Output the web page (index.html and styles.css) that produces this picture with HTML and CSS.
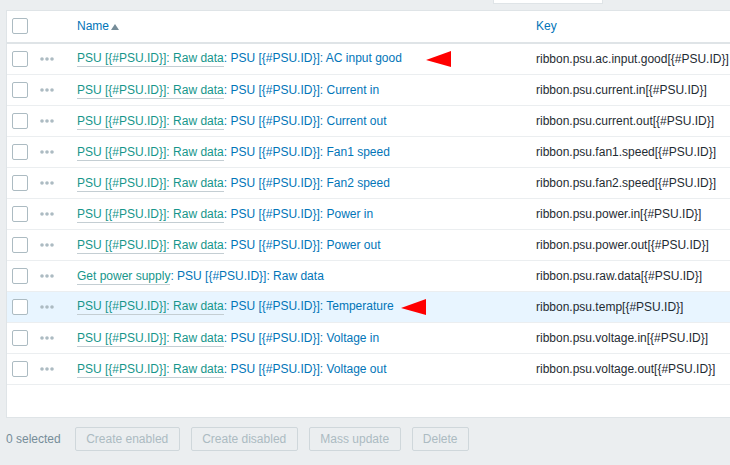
FILE: index.html
```html
<!DOCTYPE html>
<html>
<head>
    <title>Item prototypes</title>
    <link rel="stylesheet" href="styles.css">
</head>
<body>
    <div class="top-strip">
        <div class="search-stub"></div>
    </div>

    <div class="panel">
        <table class="list">
            <thead>
                <tr>
                    <th class="col-check"><span class="checkbox"></span></th>
                    <th class="col-menu"></th>
                    <th class="col-name"><a class="sort">Name</a><span class="arrow-up"></span></th>
                    <th class="col-key"><a class="sort">Key</a></th>
                </tr>
            </thead>
            <tbody id="rows"></tbody>
        </table>
    </div>

    <div class="footer">
        <span class="selected">0 selected</span>
        <button class="btn btn-enabled" disabled>Create enabled</button>
        <button class="btn btn-disabled" disabled>Create disabled</button>
        <button class="btn btn-mass" disabled>Mass update</button>
        <button class="btn btn-delete" disabled>Delete</button>
    </div>

    <script>
        // parent, name, key, mark
        const items = [
            ["PSU [{#PSU.ID}]: Raw data", "PSU [{#PSU.ID}]: AC input good", "ribbon.psu.ac.input.good[{#PSU.ID}]", "far"],
            ["PSU [{#PSU.ID}]: Raw data", "PSU [{#PSU.ID}]: Current in", "ribbon.psu.current.in[{#PSU.ID}]"],
            ["PSU [{#PSU.ID}]: Raw data", "PSU [{#PSU.ID}]: Current out", "ribbon.psu.current.out[{#PSU.ID}]"],
            ["PSU [{#PSU.ID}]: Raw data", "PSU [{#PSU.ID}]: Fan1 speed", "ribbon.psu.fan1.speed[{#PSU.ID}]"],
            ["PSU [{#PSU.ID}]: Raw data", "PSU [{#PSU.ID}]: Fan2 speed", "ribbon.psu.fan2.speed[{#PSU.ID}]"],
            ["PSU [{#PSU.ID}]: Raw data", "PSU [{#PSU.ID}]: Power in", "ribbon.psu.power.in[{#PSU.ID}]"],
            ["PSU [{#PSU.ID}]: Raw data", "PSU [{#PSU.ID}]: Power out", "ribbon.psu.power.out[{#PSU.ID}]"],
            ["Get power supply", "PSU [{#PSU.ID}]: Raw data", "ribbon.psu.raw.data[{#PSU.ID}]"],
            ["PSU [{#PSU.ID}]: Raw data", "PSU [{#PSU.ID}]: Temperature", "ribbon.psu.temp[{#PSU.ID}]", "near"],
            ["PSU [{#PSU.ID}]: Raw data", "PSU [{#PSU.ID}]: Voltage in", "ribbon.psu.voltage.in[{#PSU.ID}]"],
            ["PSU [{#PSU.ID}]: Raw data", "PSU [{#PSU.ID}]: Voltage out", "ribbon.psu.voltage.out[{#PSU.ID}]"]
        ];

        const dots = '<svg class="dots" width="14" height="4" viewBox="0 0 14 4">' +
            '<circle cx="2" cy="2" r="1.8"/><circle cx="7" cy="2" r="1.8"/><circle cx="12" cy="2" r="1.8"/></svg>';

        const tbody = document.getElementById('rows');
        items.forEach(([parent, name, key, mark]) => {
            const tr = document.createElement('tr');
            if (mark === 'near') tr.className = 'hover';
            let arrow = '';
            if (mark) {
                arrow = `<svg class="mark mark-${mark}" width="25" height="16" viewBox="0 0 25 16">` +
                    '<polygon points="0,9 25,0 25,16" fill="#ff0000"/></svg>';
            }
            tr.innerHTML =
                '<td class="col-check"><span class="checkbox"></span></td>' +
                `<td class="col-menu">${dots}</td>` +
                `<td class="col-name"><a class="parent">${parent}</a>: <a class="item">${name}</a>${arrow}</td>` +
                `<td class="col-key">${key}</td>`;
            tbody.appendChild(tr);
        });
    </script>
</body>
</html>
```

FILE: styles.css
```css
body {
    margin: 0;
    background: #ebeef0;
    font-family: "Liberation Sans", Arial, sans-serif;
    font-size: 12px;
    color: #1f2c33;
    overflow: hidden;
}

.top-strip {
    height: 10px;
}

.search-stub {
    margin-left: 493px;
    width: 108px;
    height: 3px;
    background: #fff;
    border: 1px solid #dfe4e7;
    border-top: none;
}

.panel {
    margin-left: 6px;
    width: 723px;
    background: #fff;
    border: 1px solid #dfe4e7;
    padding-bottom: 32px;
}

.list {
    width: 100%;
    border-collapse: collapse;
    table-layout: fixed;
}

.list th {
    height: 29px;
    padding: 0 0 2px;
    text-align: left;
    font-weight: normal;
    border-bottom: 2px solid #dfe4e7;
}

.list td {
    height: 30px;
    padding: 0;
    border-bottom: 1px solid #ebeef0;
    white-space: nowrap;
}

.list tr.hover td {
    background: #e8f5ff;
}

.col-check {
    width: 28px;
}

.col-menu {
    width: 42px;
}

.col-name {
    width: 459px;
    color: #0275b8;
}

.checkbox {
    display: block;
    width: 14px;
    height: 14px;
    margin-left: 5px;
    border: 1px solid #acbbc2;
    border-radius: 2px;
    background: #fff;
}

.dots {
    display: block;
    margin-left: 5px;
    fill: #acbbc2;
}

.sort {
    color: #0275b8;
}

.arrow-up {
    display: inline-block;
    width: 0;
    height: 0;
    margin-left: 2px;
    border-left: 4px solid transparent;
    border-right: 4px solid transparent;
    border-bottom: 6px solid #768d99;
    vertical-align: 0;
}

.parent {
    color: #16968b;
    border-bottom: 1px solid #c4ced3;
    padding-bottom: 1px;
}

.item {
    color: #0275b8;
}

.mark {
    vertical-align: middle;
}

.mark-far {
    margin-left: 24px;
}

.mark-near {
    margin-left: 7px;
}

.footer {
    display: flex;
    align-items: center;
    margin-top: 9px;
    padding-left: 6px;
}

.selected {
    color: #768d99;
    margin-right: 14px;
}

.btn {
    height: 24px;
    margin-right: 11px;
    padding: 0;
    white-space: nowrap;
    font-family: inherit;
    font-size: 12px;
    color: #acbbc2;
    background: #ebeef0;
    border: 1px solid #cfd7db;
    border-radius: 2px;
}

.btn-enabled { width: 105px; }
.btn-disabled { width: 107px; }
.btn-mass { width: 92px; }
.btn-delete { width: 57px; }
```
